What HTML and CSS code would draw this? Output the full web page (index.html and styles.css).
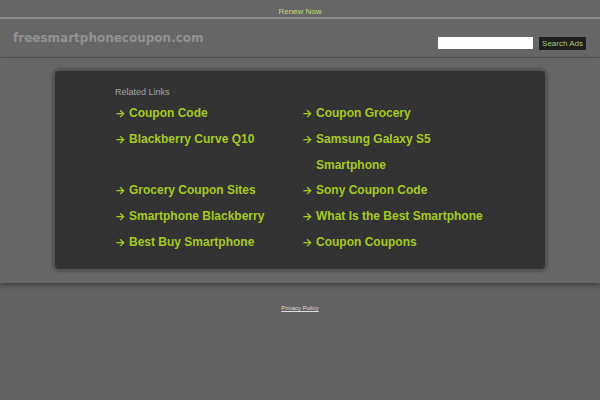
FILE: index.html
```html
<!DOCTYPE html>
<html>
<head>
<meta charset="utf-8">
<link rel="stylesheet" href="styles.css">
</head>
<body>
<div class="topbar"><a class="renew" href="#">Renew Now</a></div>
<div class="header">
  <div class="domain">freesmartphonecoupon.com</div>
  <form class="search">
    <input class="search-input" type="text">
    <button class="search-btn" type="button">Search Ads</button>
  </form>
</div>
<div class="content">
  <div class="box">
    <div class="related">Related Links</div>
    <ul class="links">
      <li><span class="arrow">→</span><a href="#">Coupon Code</a></li>
      <li><span class="arrow">→</span><a href="#">Coupon Grocery</a></li>
      <li><span class="arrow">→</span><a href="#">Blackberry Curve Q10</a></li>
      <li><span class="arrow">→</span><a href="#">Samsung Galaxy S5 Smartphone</a></li>
      <li><span class="arrow">→</span><a href="#">Grocery Coupon Sites</a></li>
      <li><span class="arrow">→</span><a href="#">Sony Coupon Code</a></li>
      <li><span class="arrow">→</span><a href="#">Smartphone Blackberry</a></li>
      <li><span class="arrow">→</span><a href="#">What Is the Best Smartphone</a></li>
      <li><span class="arrow">→</span><a href="#">Best Buy Smartphone</a></li>
      <li><span class="arrow">→</span><a href="#">Coupon Coupons</a></li>
    </ul>
  </div>
</div>
<div class="footer"><a class="privacy" href="#">Privacy Policy</a></div>
</body>
</html>
```
FILE: styles.css
```css
html, body {
  margin: 0;
  padding: 0;
  background: #626262;
  font-family: "Liberation Sans", Arial, sans-serif;
}
.topbar {
  height: 17px;
  background: #666;
  border-bottom: 2px solid #8a8a8a;
  text-align: center;
  line-height: 18px;
}
.renew {
  color: #c3dd7a;
  font-size: 8px;
  text-decoration: none;
}
.header {
  height: 38px;
  background: #666;
  border-bottom: 1px solid #555;
  display: flex;
  align-items: flex-start;
  padding: 0 14px 0 13px;
}
.domain {
  font-family: "DejaVu Sans", Verdana, sans-serif;
  font-weight: bold;
  font-size: 12px;
  color: #929292;
  margin-top: 12px;
  flex: 1;
}
.search {
  display: flex;
  gap: 6px;
  margin-top: 18px;
}
.search-input {
  width: 95px;
  height: 12px;
  border: 0;
  padding: 0;
  margin: 0;
  background: #fff;
  box-sizing: border-box;
}
.search-btn {
  height: 13px;
  padding: 0 3px;
  border: 0;
  background: #1f1f1f;
  color: #a9c86e;
  font-family: "Liberation Sans", Arial, sans-serif;
  font-size: 8px;
  line-height: 13px;
}
.content {
  background: #666;
  padding: 11px 53px 12px 53px;
  box-shadow: 0 2px 5px rgba(0,0,0,0.35);
}
.box {
  background: #333;
  border: 2px solid #555;
  border-radius: 6px;
  box-shadow: 0 0 3px rgba(0,0,0,0.4);
  height: 202px;
  box-sizing: border-box;
  padding: 15px 0 0 60px;
}
.related {
  color: #a3a3a3;
  font-size: 9px;
  line-height: 12px;
}
.links {
  list-style: none;
  margin: 3px 0 0 0;
  padding: 0;
  display: grid;
  grid-template-columns: 187px 187px;
}
.links li {
  font-size: 12px;
  font-weight: bold;
  line-height: 25.8px;
  color: #a4ca1f;
  display: flex;
}
.arrow {
  width: 14px;
  flex: none;
  font-family: Inter, "DejaVu Sans", sans-serif;
  font-weight: 700;
  font-size: 11px;
}
.links a {
  color: #a4ca1f;
  text-decoration: none;
}
.footer {
  text-align: center;
  padding-top: 13px;
}
.privacy {
  font-size: 6px;
  color: #ddd;
}
```
